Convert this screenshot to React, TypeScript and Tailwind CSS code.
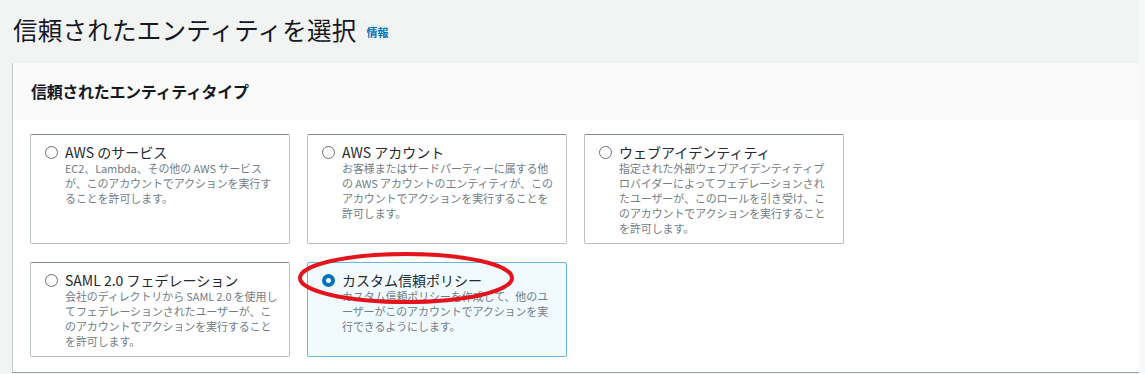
import React from "react";

interface EntityOption {
  title: string;
  lines: string[];
  selected?: boolean;
}

const options: EntityOption[] = [
  {
    title: "AWS のサービス",
    lines: ["EC2、Lambda、その他の AWS サービス", "が、このアカウントでアクションを実行す", "ることを許可します。"],
  },
  {
    title: "AWS アカウント",
    lines: [
      "お客様またはサードパーティーに属する他",
      "の AWS アカウントのエンティティが、この",
      "アカウントでアクションを実行することを",
      "許可します。",
    ],
  },
  {
    title: "ウェブアイデンティティ",
    lines: [
      "指定された外部ウェブアイデンティティプ",
      "ロバイダーによってフェデレーションされ",
      "たユーザーが、このロールを引き受け、こ",
      "のアカウントでアクションを実行すること",
      "を許可します。",
    ],
  },
  {
    title: "SAML 2.0 フェデレーション",
    lines: [
      "会社のディレクトリから SAML 2.0 を使用し",
      "てフェデレーションされたユーザーが、こ",
      "のアカウントでアクションを実行すること",
      "を許可します。",
    ],
  },
  {
    title: "カスタム信頼ポリシー",
    lines: ["カスタム信頼ポリシーを作成して、他のユ", "ーザーがこのアカウントでアクションを実", "行できるようにします。"],
    selected: true,
  },
];

function OptionCard({ option }: { option: EntityOption }) {
  return (
    <div
      className={
        option.selected
          ? "flex gap-[7px] pl-[14px] pt-[8px] pb-[7px] rounded-[2px] border border-[#6cb4e4] bg-[#f1faff]"
          : "flex gap-[7px] pl-[14px] pt-[8px] pb-[7px] rounded-[2px] border border-[#b8c2c3] border-t-[#7f8b8c] bg-white"
      }
    >
      <div className="h-[18px] flex items-center shrink-0">
        {option.selected ? (
          <div className="w-[13px] h-[13px] rounded-full border-[4px] border-[#0073bb] bg-white" />
        ) : (
          <div className="w-[13px] h-[13px] rounded-full border-[1.5px] border-[#687078] bg-white" />
        )}
      </div>
      <div className="min-w-0">
        <div className="text-[14px] leading-[18px] text-[#232a31] whitespace-nowrap">{option.title}</div>
        {option.lines.map((line) => (
          <div key={line} className="text-[11px] leading-[15px] text-[#737d87] whitespace-nowrap tracking-[-0.01em]">
            {line}
          </div>
        ))}
      </div>
    </div>
  );
}

export default function App() {
  return (
    <div className="relative w-[1145px] h-[374px] flex bg-[#f2f3f3] overflow-hidden font-['Noto_Sans_CJK_JP','Noto_Sans',sans-serif]">
      <div className="flex-1 flex flex-col pl-[12px] pb-[1px]">
        {/* Page title */}
        <div className="h-[63px] flex items-center gap-[10px] pl-[1px] pb-[4px]">
          <h1 className="text-[24.5px] leading-[30px] text-[#16191f] tracking-[0.01em]">信頼されたエンティティを選択</h1>
          <a className="text-[11px] font-bold text-[#0073bb] mt-[6px]">情報</a>
        </div>

        {/* Panel */}
        <div className="flex-1 flex flex-col bg-white border-l border-b border-[#c6cccd] border-b-[#97a3a4]">
          <div className="h-[57px] bg-[#fafafa] flex items-center pl-[18px] pb-[2px]">
            <h2 className="text-[16px] font-bold text-[#16191f] tracking-[-0.02em]">信頼されたエンティティタイプ</h2>
          </div>
          <div className="pt-[14px] pl-[17px]">
            <div className="grid grid-cols-3 w-[814px] gap-x-[17px] gap-y-[18px]">
              {options.map((o) => (
                <OptionCard key={o.title} option={o} />
              ))}
            </div>
          </div>
        </div>
      </div>
      <div className="w-[6px] bg-[#f7f8fa]" />

      {/* red annotation */}
      <svg className="absolute left-[296px] top-[251px] pointer-events-none" width="220" height="54" viewBox="0 0 220 54">
        <ellipse cx="110" cy="27" rx="106" ry="24" fill="none" stroke="#e3141c" strokeWidth="4" />
      </svg>
    </div>
  );
}
